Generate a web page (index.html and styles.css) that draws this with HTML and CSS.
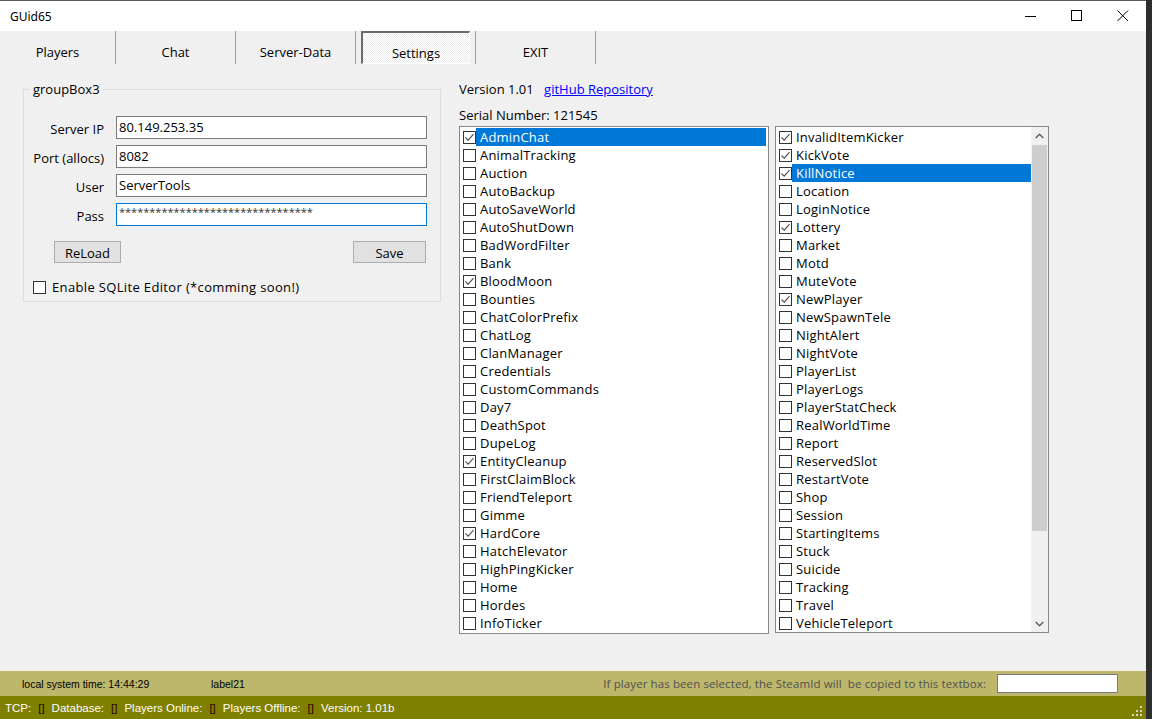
FILE: index.html
```html
<!DOCTYPE html>
<html>
<head>
<meta charset="utf-8">
<link rel="stylesheet" href="styles.css">
</head>
<body>
<div class="window">
  <div class="titlebar">
    <span class="title">GUid65</span>
    <div class="caption">
      <span class="cap-btn"><svg width="12" height="12" viewBox="0 0 12 12"><path d="M0 6.5H11" stroke="#000" stroke-width="1"/></svg></span>
      <span class="cap-btn"><svg width="12" height="12" viewBox="0 0 12 12"><rect x="0.5" y="0.5" width="10" height="10" fill="none" stroke="#000"/></svg></span>
      <span class="cap-btn"><svg width="12" height="12" viewBox="0 0 12 12"><path d="M0.5 0.5L11 11M11 0.5L0.5 11" stroke="#000" stroke-width="1"/></svg></span>
    </div>
  </div>

  <div class="tabs">
    <div class="tab first">Players</div>
    <div class="tab">Chat</div>
    <div class="tab">Server-Data</div>
    <div class="tab"><div class="tab-pressed">Settings</div></div>
    <div class="tab">EXIT</div>
  </div>

  <div class="content">
    <div class="groupbox">
      <span class="legend">groupBox3</span>
      <div class="form-row"><label class="lbl">Server IP</label><div class="input">80.149.253.35</div></div>
      <div class="form-row"><label class="lbl">Port (allocs)</label><div class="input">8082</div></div>
      <div class="form-row"><label class="lbl">User</label><div class="input">ServerTools</div></div>
      <div class="form-row"><label class="lbl">Pass</label><div class="input focus"><span class="pw">********************************</span></div></div>
      <div class="btn-row">
        <div class="btn reload">ReLoad</div>
        <div class="btn save">Save</div>
      </div>
      <div class="chk-row"><span class="cb"></span><span class="chk-label">Enable SQLite Editor (*comming soon!)</span></div>
    </div>

    <div class="rightcol">
      <div class="version">Version 1.01 <a class="link">gitHub Repository</a></div>
      <div class="serial">Serial Number: 121545</div>
      <div class="lists">
        <div class="list left" id="listL"></div>
        <div class="list right">
          <div class="list-items" id="listR"></div>
          <div class="scrollbar">
            <div class="sb-arrow"><svg width="9" height="6" viewBox="0 0 9 6"><path d="M0.7 5L4.5 1.3L8.3 5" fill="none" stroke="#606060" stroke-width="1.6"/></svg></div>
            <div class="sb-track"><div class="sb-thumb"></div></div>
            <div class="sb-arrow"><svg width="9" height="6" viewBox="0 0 9 6"><path d="M0.7 1L4.5 4.7L8.3 1" fill="none" stroke="#606060" stroke-width="1.6"/></svg></div>
          </div>
        </div>
      </div>
    </div>
  </div>

  <div class="status1">
    <span class="st-time">local system time: 14:44:29</span>
    <span class="st-label">label21</span>
    <span class="st-hint">If player has been selected, the SteamId will&nbsp; be copied to this textbox:</span>
    <div class="st-box"></div>
  </div>
  <div class="status2">
    <span>TCP:</span><span class="br">[]</span><span>Database:</span><span class="br">[]</span><span>Players Online:</span><span class="br">[]</span><span>Players Offline:</span><span class="br">[]</span><span>Version: 1.01b</span>
    <svg class="grip" width="12" height="12" viewBox="0 0 12 12" fill="#d8d8c8"><rect x="9" y="1" width="2" height="2"/><rect x="5" y="5" width="2" height="2"/><rect x="9" y="5" width="2" height="2"/><rect x="1" y="9" width="2" height="2"/><rect x="5" y="9" width="2" height="2"/><rect x="9" y="9" width="2" height="2"/></svg>
  </div>
</div>
<script src="app.js"></script>
</body>
</html>
```

FILE: app.js
```js
var left = [
  ["AdminChat",1,1],["AnimalTracking"],["Auction"],["AutoBackup"],["AutoSaveWorld"],["AutoShutDown"],
  ["BadWordFilter"],["Bank"],["BloodMoon",1],["Bounties"],["ChatColorPrefix"],["ChatLog"],["ClanManager"],
  ["Credentials"],["CustomCommands"],["Day7"],["DeathSpot"],["DupeLog"],["EntityCleanup",1],["FirstClaimBlock"],
  ["FriendTeleport"],["Gimme"],["HardCore",1],["HatchElevator"],["HighPingKicker"],["Home"],["Hordes"],["InfoTicker"]
];
var right = [
  ["InvalidItemKicker",1],["KickVote",1],["KillNotice",1,1],["Location"],["LoginNotice"],["Lottery",1],["Market"],
  ["Motd"],["MuteVote"],["NewPlayer",1],["NewSpawnTele"],["NightAlert"],["NightVote"],["PlayerList"],["PlayerLogs"],
  ["PlayerStatCheck"],["RealWorldTime"],["Report"],["ReservedSlot"],["RestartVote"],["Shop"],["Session"],
  ["StartingItems"],["Stuck"],["Suicide"],["Tracking"],["Travel"],["VehicleTeleport"]
];
var check = '<svg width="11" height="11" viewBox="0 0 11 11"><path d="M1.5 5.5L4.2 8.2L9.5 2.2" fill="none" stroke="#505050" stroke-width="1.1"/></svg>';
function fill(id, arr) {
  var el = document.getElementById(id);
  var html = "";
  arr.forEach(function (it) {
    html += '<div class="item"><span class="cb">' + (it[1] ? check : "") + '</span><span class="txt' + (it[2] ? " sel" : "") + '">' + it[0] + '</span></div>';
  });
  el.innerHTML = html;
}
fill("listL", left);
fill("listR", right);
```

FILE: styles.css
```css
html, body {
  margin: 0;
  padding: 0;
}
body {
  background: #2e2e2e;
  width: 1152px;
  height: 719px;
  overflow: hidden;
  font-family: "Open Sans", "DejaVu Sans", sans-serif;
  font-size: 13px;
  color: #000;
}
.window {
  width: 1146px;
  height: 718px;
  border-top: 1px solid #5a5a5a;
  background: #f0f0f0;
  display: flex;
  flex-direction: column;
  position: relative;
}
.titlebar {
  height: 30px;
  background: #fff;
  display: flex;
  align-items: center;
  justify-content: space-between;
}
.title {
  font-family: "Noto Sans", sans-serif;
  font-size: 12px;
  margin-left: 10px;
}
.caption {
  display: flex;
  height: 30px;
}
.cap-btn {
  width: 46px;
  height: 30px;
  display: flex;
  align-items: center;
  justify-content: center;
}
.tabs {
  height: 35px;
  display: flex;
}
.tab {
  height: 33px;
  border-right: 1px solid #a0a0a0;
  display: flex;
  align-items: center;
  justify-content: center;
  padding-top: 9px;
  box-sizing: border-box;
  padding-bottom: 0;
}
.tab.first {
  width: 116px;
}
.tab:not(.first) {
  width: 120px;
}
.tab:nth-child(4) {
  padding-top: 0;
  align-items: flex-start;
}
.tab-pressed {
  width: 109px;
  height: 33px;
  border-top: 2px solid #6a6a6a;
  border-left: 2px solid #6a6a6a;
  border-right: 1px solid #fff;
  border-bottom: 1px solid #fff;
  box-sizing: border-box;
  display: flex;
  align-items: center;
  justify-content: center;
  padding-top: 9px;
  background-color: #f4f4f4;
  background-image: repeating-conic-gradient(#ffffff 0 25%, #ececec 0 50%);
  background-size: 2px 2px;
}
.content {
  flex: 1;
  display: flex;
  align-items: flex-start;
}
.groupbox {
  position: relative;
  margin: 23px 0 0 23px;
  width: 416px;
  height: 185px;
  border: 1px solid #dcdcdc;
  padding-top: 26px;
}
.legend {
  position: absolute;
  top: -9px;
  left: 6px;
  padding: 0 3px;
  background: #f0f0f0;
  line-height: 16px;
}
.form-row {
  display: flex;
  align-items: center;
  height: 23px;
  margin-bottom: 6px;
}
.lbl {
  width: 80px;
  text-align: right;
  margin-right: 12px;
  white-space: nowrap;
  padding-top: 3px;
}
.input {
  width: 307px;
  height: 21px;
  border: 1px solid #7a7a7a;
  background: #fff;
  padding-left: 2px;
  line-height: 20px;
  white-space: nowrap;
  overflow: hidden;
}
.input.focus {
  border-color: #0078d7;
  color: #333;
}
.pw {
  font-size: 11px;
  letter-spacing: 0;
  position: relative;
  top: -3px;
}
.btn-row {
  display: flex;
  justify-content: space-between;
  margin: 15px 14px 0 30px;
}
.btn {
  height: 19px;
  border: 1px solid #adadad;
  background: #e1e1e1;
  display: flex;
  align-items: center;
  justify-content: center;
  padding-top: 1px;
}
.reload { width: 65px; }
.save { width: 71px; }
.chk-row {
  display: flex;
  align-items: center;
  margin: 15px 0 0 9px;
  gap: 6px;
}
.chk-label {
  letter-spacing: 0.35px;
}
.cb {
  width: 11px;
  height: 11px;
  border: 1px solid #333;
  background: #fff;
  flex: none;
  display: flex;
}
.rightcol {
  margin: 15px 0 0 18px;
  display: flex;
  flex-direction: column;
}
.version {
  line-height: 16px;
}
.link {
  color: #0000ff;
  text-decoration: underline;
  margin-left: 7px;
}
.serial {
  line-height: 16px;
  margin-top: 10px;
}
.lists {
  display: flex;
  gap: 6px;
  margin-top: 3px;
}
.list {
  height: 505px;
  border: 1px solid #828790;
  background: #fff;
  overflow: hidden;
}
.list.left {
  width: 308px;
  padding-top: 1px;
}
.list.right {
  width: 272px;
  display: flex;
}
.list-items {
  flex: 1;
  padding-top: 1px;
}
.item {
  display: flex;
  align-items: center;
  height: 18px;
}
.item .cb {
  margin-left: 3px;
}
.txt {
  flex: 1;
  height: 18px;
  line-height: 18px;
  padding-left: 4px;
  margin-right: 2px;
  white-space: nowrap;
  letter-spacing: 0.2px;
}
.txt.sel {
  background: #0078d7;
  color: #fff;
}
.list.right .txt {
  margin-right: 0;
}
.scrollbar {
  width: 17px;
  background: #f0f0f0;
  display: flex;
  flex-direction: column;
}
.sb-arrow {
  height: 17px;
  display: flex;
  align-items: center;
  justify-content: center;
}
.sb-track {
  flex: 1;
  padding: 1px 1px;
}
.sb-thumb {
  height: 386px;
  background: #cdcdcd;
}
.status1 {
  height: 25px;
  background: #bdb76b;
  display: flex;
  align-items: center;
  font-family: "Liberation Sans", Arial, sans-serif;
  font-size: 10.5px;
  color: #000;
}
.st-time { margin-left: 22px; width: 189px; }
.st-label { width: 150px; }
.st-hint {
  margin-left: auto;
  font-family: "Open Sans", sans-serif;
  font-size: 11.5px;
  letter-spacing: 0.1px;
  color: #505050;
}
.st-box {
  width: 119px;
  height: 17px;
  border: 1px solid #7a7a7a;
  background: #fff;
  margin: 0 28px 0 11px;
}
.status2 {
  height: 23px;
  background: #808000;
  display: flex;
  align-items: center;
  font-family: "Liberation Sans", Arial, sans-serif;
  font-size: 11.5px;
  color: #fff;
  padding-left: 5px;
  position: relative;
}
.status2 span { margin-right: 7px; }
.status2 .br { color: #2a0000; }
.grip {
  position: absolute;
  right: 3px;
  bottom: 2px;
}
```
